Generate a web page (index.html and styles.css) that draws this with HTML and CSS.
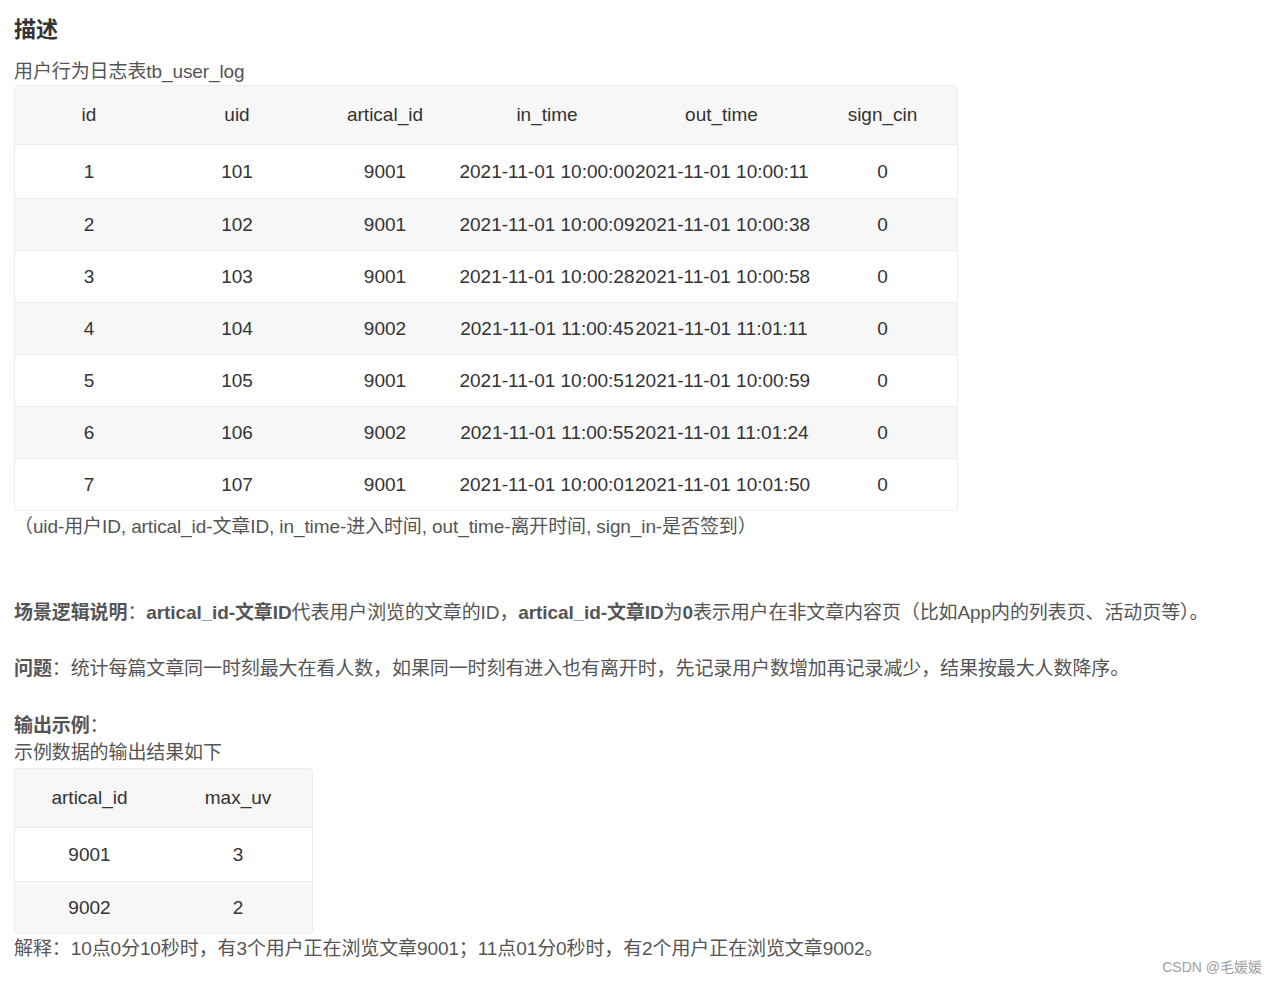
FILE: index.html
```html
<!DOCTYPE html>
<html lang="zh-CN">
<head>
<meta charset="utf-8">
<title>描述</title>
<link rel="stylesheet" href="styles.css">
</head>
<body>
<main class="page">
  <h2 class="title">描述</h2>
  <p class="line">用户行为日志表tb_user_log</p>
  <div class="tbl-wrap tbl-wide">
    <table class="tbl">
      <thead>
        <tr><th class="c-id">id</th><th class="c-uid">uid</th><th class="c-art">artical_id</th><th class="c-in">in_time</th><th class="c-out">out_time</th><th class="c-sign">sign_cin</th></tr>
      </thead>
      <tbody>
        <tr><td>1</td><td>101</td><td>9001</td><td>2021-11-01 10:00:00</td><td>2021-11-01 10:00:11</td><td>0</td></tr>
        <tr><td>2</td><td>102</td><td>9001</td><td>2021-11-01 10:00:09</td><td>2021-11-01 10:00:38</td><td>0</td></tr>
        <tr><td>3</td><td>103</td><td>9001</td><td>2021-11-01 10:00:28</td><td>2021-11-01 10:00:58</td><td>0</td></tr>
        <tr><td>4</td><td>104</td><td>9002</td><td>2021-11-01 11:00:45</td><td>2021-11-01 11:01:11</td><td>0</td></tr>
        <tr><td>5</td><td>105</td><td>9001</td><td>2021-11-01 10:00:51</td><td>2021-11-01 10:00:59</td><td>0</td></tr>
        <tr><td>6</td><td>106</td><td>9002</td><td>2021-11-01 11:00:55</td><td>2021-11-01 11:01:24</td><td>0</td></tr>
        <tr><td>7</td><td>107</td><td>9001</td><td>2021-11-01 10:00:01</td><td>2021-11-01 10:01:50</td><td>0</td></tr>
      </tbody>
    </table>
  </div>
  <p class="line caption">（uid-用户ID, artical_id-文章ID, in_time-进入时间, out_time-离开时间, sign_in-是否签到）</p>

  <p class="line para-first"><b>场景逻辑说明</b>：<b>artical_id-文章ID</b>代表用户浏览的文章的ID，<b>artical_id-文章ID</b>为<b>0</b>表示用户在非文章内容页（比如App内的列表页、活动页等）。</p>

  <p class="line para"><b>问题</b>：统计每篇文章同一时刻最大在看人数，如果同一时刻有进入也有离开时，先记录用户数增加再记录减少，结果按最大人数降序。</p>

  <p class="line para para-out"><b>输出示例</b>：</p>
  <p class="line">示例数据的输出结果如下</p>
  <div class="tbl-wrap tbl-small">
    <table class="tbl">
      <thead>
        <tr><th class="c-a">artical_id</th><th class="c-b">max_uv</th></tr>
      </thead>
      <tbody>
        <tr><td>9001</td><td>3</td></tr>
        <tr><td>9002</td><td>2</td></tr>
      </tbody>
    </table>
  </div>
  <p class="line explain">解释：10点0分10秒时，有3个用户正在浏览文章9001；11点01分0秒时，有2个用户正在浏览文章9002。</p>
</main>
<div class="watermark">CSDN @毛媛媛</div>
</body>
</html>
```

FILE: styles.css
```css
html, body {
  margin: 0;
  padding: 0;
  background: #ffffff;
}

body {
  font-family: "Liberation Sans", Arial, "Noto Sans CJK SC", sans-serif;
  color: #555555;
  font-size: 19px;
}

.page {
  padding: 16px 14px 0 14px;
}

.title {
  margin: 0;
  font-size: 22px;
  line-height: 28px;
  font-weight: bold;
  color: #333333;
}

.line {
  margin: 0;
  line-height: 27px;
  letter-spacing: -0.1px;
}

.title + .line {
  margin-top: 14px;
}

.line b {
  font-weight: bold;
}

.caption {
  margin-top: 2px;
}

.para-first {
  margin-top: 59px;
}

.para {
  margin-top: 29px;
}

.para-out {
  margin-top: 30px;
}

.explain {
  margin-top: 1px;
}

.tbl-wrap {
  border: 1px solid #ececec;
  border-radius: 4px;
  overflow: hidden;
  background: #ffffff;
}

.tbl-wide {
  width: 942px;
}

.tbl-small {
  width: 297px;
  margin-top: 2px;
}

.tbl {
  border-collapse: collapse;
  table-layout: fixed;
  width: 100%;
  color: #333333;
  font-size: 19px;
}

.tbl th,
.tbl td {
  padding: 0;
  text-align: center;
  white-space: nowrap;
  font-weight: normal;
}

.tbl th {
  height: 58px;
  background: #f7f7f7;
  border-bottom: 1px solid #eeeeee;
}

.tbl td {
  height: 51px;
  border-top: 1px solid #eeeeee;
}

.tbl tbody tr:first-child td {
  border-top: none;
  height: 53px;
}

.tbl tbody tr:nth-child(even) td {
  background: #f7f7f7;
}

.c-id { width: 148px; }
.c-uid { width: 148px; }
.c-art { width: 148px; }
.c-in { width: 176px; }
.c-out { width: 173px; }
.c-sign { width: 149px; }

.c-a { width: 149px; }
.c-b { width: 148px; }

.watermark {
  position: absolute;
  right: 15px;
  top: 957px;
  font-size: 14px;
  line-height: 20px;
  color: #a0a0a0;
  font-family: "Liberation Sans", Arial, "Noto Sans CJK SC", sans-serif;
}
```
